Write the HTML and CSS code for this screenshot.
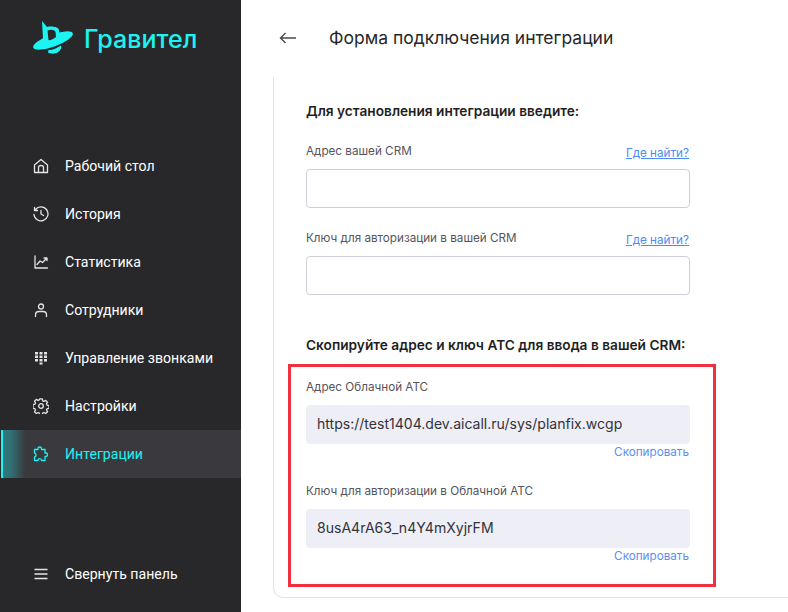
FILE: index.html
```html
<!DOCTYPE html>
<html lang="ru">
<head>
<meta charset="utf-8">
<title>Форма подключения интеграции</title>
<link rel="stylesheet" href="styles.css">
</head>
<body>
<div class="app">
  <aside class="sidebar">
    <div class="brand">
      <svg class="logo" width="42" height="34" viewBox="0 0 42 34"><ellipse cx="20" cy="19.500" rx="21" ry="6" transform="rotate(-20 20 19.500)" fill="#1ef3f3"/><path fill="#1ef3f3" d="M9 0 L14 6 C18 5 25 5.500 26 9 L27 16 L12 24 L10 18 Z"/><path fill="#1ef3f3" d="M15.500 29 C20 29 24 27 28 24.500 C29 27 27 30 24.500 31.500 C22 33 17.500 33 15 31.500 Z"/><path fill="#28282a" d="M14.500 9.500 C18 8 21.500 9 22.500 11 L23 16 C20 18.500 17 19.500 15.500 19 Z"/></svg>
      <span class="brand-name">Гравител</span>
    </div>
    <nav class="nav">
      <a class="nav-item"><svg class="ico" viewBox="0 0 16 16"><path d="M1.500 14.500V7L8 1.500 14.500 7v7.500zM5.500 14.500V9.500C5.500 8 6.500 7.500 8 7.500s2.500.5 2.500 2v5"/></svg><span>Рабочий стол</span></a>
      <a class="nav-item"><svg class="ico" viewBox="0 0 16 16"><path d="M2.500 3.500A7 7 0 1 1 1 8.500M1.500 1.500v3h3M8 4.500V8l2.500 1.500"/></svg><span>История</span></a>
      <a class="nav-item"><svg class="ico" viewBox="0 0 16 16"><path d="M2 2v12h12.500M4 10.500l3-3.500 2.500 1.500 4-4M11 4h3v2.500"/></svg><span>Статистика</span></a>
      <a class="nav-item"><svg class="ico" viewBox="0 0 16 16"><circle cx="8" cy="4.500" r="2.500"/><path d="M2.500 14.500V13c0-2 1.500-3.500 3.500-3.500h4c2 0 3.500 1.500 3.500 3.500v1.500"/></svg><span>Сотрудники</span></a>
      <a class="nav-item"><svg class="ico dots" viewBox="0 0 16 16"><path d="M2 2h3v2.500H2zM6.500 2h3v2.500h-3zM11 2h3v2.500h-3zM2 5.500h3V8H2zM6.500 5.500h3V8h-3zM11 5.500h3V8h-3zM2 9h3v2.500H2zM6.500 9h3v2.500h-3zM11 9h3v2.500h-3zM6.500 12.500h3v2h-3z"/></svg><span>Управление звонками</span></a>
      <a class="nav-item"><svg class="ico" viewBox="0 0 16 16"><circle cx="8" cy="8" r="2.300"/><path d="M6.700.9h2.600l.4 1.900 1.300.6 1.700-1 1.800 1.800-1 1.700.6 1.300 1.900.5v2.600l-1.900.4-.6 1.300 1 1.700-1.800 1.800-1.700-1-1.300.6-.4 1.900H6.700l-.4-1.900-1.300-.6-1.700 1-1.800-1.800 1-1.700-.6-1.300-1.900-.4V6.700l1.900-.5.6-1.300-1-1.700 1.800-1.800 1.700 1 1.300-.6z"/></svg><span>Настройки</span></a>
      <a class="nav-item active"><svg class="ico" viewBox="0 0 16 16"><path d="M1.500 3.500h3.500V2.500c0-2 3.500-2 3.500 0v1h3.500V7h1c2 0 2 3.500 0 3.500h-1v4H8.500c0-2.500-3.500-2.500-3.500 0H1.500V11c2 0 2-4 0-4z"/></svg><span>Интеграции</span></a>
    </nav>
    <a class="nav-item collapse"><svg class="ico bars" viewBox="0 0 16 16"><path d="M1.500 3.500h13M1.500 8h13M1.500 12.500h13"/></svg><span>Свернуть панель</span></a>
  </aside>
  <main class="main">
    <header class="head">
      <svg class="back" width="18" height="12" viewBox="0 0 18 12"><path d="M17 6H1.500M6.500 1 1.500 6l5 5"/></svg>
      <h1>Форма подключения интеграции</h1>
    </header>
    <section class="card">
      <h2 class="h-first">Для установления интеграции введите:</h2>
      <div class="field">
        <div class="label-row"><label>Адрес вашей CRM</label><a class="find">Где найти?</a></div>
        <div class="input"></div>
      </div>
      <div class="field">
        <div class="label-row"><label>Ключ для авторизации в вашей CRM</label><a class="find">Где найти?</a></div>
        <div class="input"></div>
      </div>
      <h2 class="h-second">Скопируйте адрес и ключ АТС для ввода в вашей CRM:</h2>
      <div class="copy">
        <label>Адрес Облачной АТС</label>
        <div class="value">https://test1404.dev.aicall.ru/sys/planfix.wcgp</div>
        <a class="copy-link">Скопировать</a>
      </div>
      <div class="copy">
        <label>Ключ для авторизации в Облачной АТС</label>
        <div class="value">8usA4rA63_n4Y4mXyjrFM</div>
        <a class="copy-link">Скопировать</a>
      </div>
      <div class="highlight"></div>
    </section>
  </main>
</div>
</body>
</html>
```

FILE: styles.css
```css
* { box-sizing: border-box; }
html, body { margin: 0; height: 100%; overflow: hidden; }
body { background: #fff; font-family: Inter, "Noto Sans", sans-serif; color: #27272b; }
.app { display: flex; height: 612px; }
.sidebar { width: 241px; flex: none; background: #28282a; display: flex; flex-direction: column; color: #fff; font-family: Roboto, sans-serif; }
.brand { height: 142px; padding: 21px 0 0 33px; display: flex; align-items: flex-start; gap: 9px; }
.logo { display: block; }
.brand-name { color: #1ef3f3; font-family: Inter, sans-serif; font-weight: 500; font-size: 25px; line-height: 36px; letter-spacing: .05px; }
.nav { display: flex; flex-direction: column; flex: 1; }
.nav-item { height: 48px; display: flex; align-items: center; padding-left: 33px; gap: 16px; font-size: 14.100px; color: #fff; flex: none; }
.ico { width: 16px; height: 16px; fill: none; stroke: #e4e4e6; stroke-width: 1.300; stroke-linejoin: round; stroke-linecap: round; flex: none; }
.dots { fill: #e4e4e6; stroke: none; }
.bars { stroke-width: 1.500; stroke-linecap: butt; }
.active { margin-left: 1px; color: #1ef3f3; background: linear-gradient(90deg, rgba(30, 243, 243, .35), rgba(30, 243, 243, .3) 8px, rgba(58, 58, 62, 1) 22px); background-color: #38383c; border-left: 2px solid #1ef3f3; padding-left: 30px; }
.active .ico { stroke: #1ef3f3; }
.collapse { margin-bottom: 14px; }
.main { flex: 1; min-width: 0; padding-left: 32px; }
.head { height: 77px; display: flex; align-items: center; gap: 32px; padding: 0 0 2px 6px; }
.back { fill: none; stroke: #4a4a4e; stroke-width: 1.400; flex: none; }
h1 { margin: 0; font-size: 17.500px; font-weight: 400; line-height: 24px; }
.card { position: relative; width: 515px; height: 521px; border: 1px solid #e3e3ec; border-top: 0; border-right: 0; border-radius: 0 0 0 10px; padding: 0 0 0 32px; }
h2 { margin: 0; font-size: 13.700px; font-weight: 600; line-height: 20px; color: #1f1f23; }
.h-first { padding-top: 24px; height: 64px; }
.h-second { margin-top: 40px; height: 43px; }
.field { width: 384px; margin-bottom: 20px; }
.label-row { display: flex; justify-content: space-between; align-items: flex-end; height: 28px; padding-bottom: 10px; }
label { display: block; font-size: 11.700px; line-height: 16px; color: #55555b; }
.find { font-size: 11.700px; line-height: 16px; color: #4c8bf5; text-decoration: underline; margin: 0 1px -2px 0; }
.input { height: 39px; border: 1px solid #cfcfd9; border-radius: 4px; background: #fff; }
.copy { width: 384px; height: 104px; display: flex; flex-direction: column; }
.copy label { height: 27px; padding-top: 1px; }
.value { height: 39px; background: #eeeef6; border-radius: 4px; padding: 0 11px; font-size: 14.050px; line-height: 38px; color: #33333a; }
.copy-link { align-self: flex-end; font-size: 11.700px; line-height: 16px; color: #5b8ff0; margin-right: 1px; }
.highlight { position: absolute; left: 14px; top: 287px; width: 428px; height: 223px; border: 3px solid #f0303f; pointer-events: none; }
```
